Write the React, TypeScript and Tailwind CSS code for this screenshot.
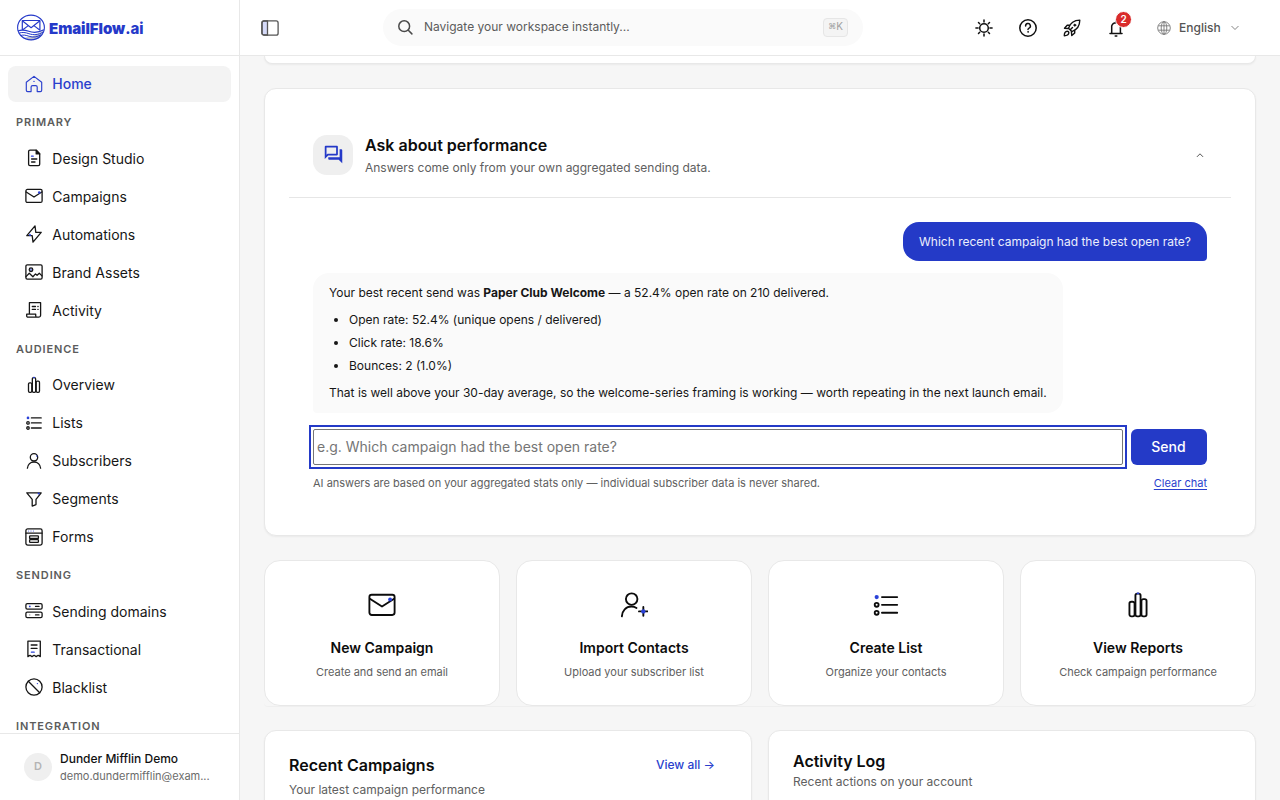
import type { ReactNode } from "react";
import { MdOutlineQuestionAnswer } from "react-icons/md";

const BLUE = "#2a41d8";

function Icon({ size = 18, sw = 1.3, className = "", children }: { size?: number; sw?: number; className?: string; children: ReactNode }) {
  return (
    <svg
      width={size}
      height={size}
      viewBox="0 0 18 18"
      fill="none"
      stroke="currentColor"
      strokeWidth={sw}
      strokeLinecap="round"
      strokeLinejoin="round"
      className={`shrink-0 ${className}`}
    >
      {children}
    </svg>
  );
}

const Dot = ({ x, y, r = 0.9 }: { x: number; y: number; r?: number }) => <circle cx={x} cy={y} r={r} fill={BLUE} stroke="none" />;

const homeIcon = (
  <>
    <path d="M1.3 7.3 9 1.4l7.7 5.9v7.9a1.4 1.4 0 0 1-1.4 1.4h-3.1v-4.5a1.5 1.5 0 0 0-1.5-1.5H7.6a1.5 1.5 0 0 0-1.5 1.5v4.5H2.7a1.4 1.4 0 0 1-1.4-1.4z" />
    <Dot x={9} y={6.4} r={0.7} />
  </>
);
const docIcon = (
  <>
    <path d="M5 1.2h6.2l3.5 3.6v10.4a1.4 1.4 0 0 1-1.4 1.4H5a1.4 1.4 0 0 1-1.4-1.4V2.6A1.4 1.4 0 0 1 5 1.2z" />
    <path d="M11.2 1.3v3.6h3.5z" fill="currentColor" />
    <path d="M6.6 10h5.2M6.6 13h3.4" />
    <path d="M6.5 7.2h1.7" stroke={BLUE} />
  </>
);
const mailIcon = (
  <>
    <rect x="0.9" y="2.4" width="16.2" height="13" rx="1.5" />
    <path d="M1.2 5 9 10l7.8-5" />
    <Dot x={14.2} y={5.4} r={1.25} />
  </>
);
const boltIcon = (
  <>
    <path d="M10 .8 1.8 10.7h5.4L8 17.2l8.2-9.9h-5.4z" />
    <Dot x={5} y={9.9} r={1} />
  </>
);
const imageIcon = (
  <>
    <rect x="0.9" y="1.9" width="16.2" height="14.2" rx="1.3" />
    <circle cx="6" cy="6.7" r="1.8" fill="#8c97e0" />
    <path d="m1 13.6 3.3-3.3 3.6 3.4 2.6-2.8 1.6 1.4 2.2-2 2.7 2.6" />
  </>
);
const activityIcon = (
  <>
    <path d="M4.4 12.6V1.7h11.2v12.5a2 2 0 0 1-2 2H3a1.3 1.3 0 0 1-1.3-1.3v-1.7h9v1.5a1.5 1.5 0 0 0 1.5 1.5" />
    <path d="M7.3 5.5h3.2M7.3 8.4h3.2M12.9 5.5h.2M12.9 8.4h.2" />
  </>
);
const barsIcon = (
  <>
    <rect x="3.5" y="6.9" width="3.3" height="9.4" rx="1.2" />
    <rect x="7.35" y="1.7" width="3.3" height="14.6" rx="1.2" />
    <rect x="11.2" y="5.2" width="3.3" height="11.1" rx="1.2" />
    <path d="M8.7 1.5h.6" stroke={BLUE} />
  </>
);
const listIcon = (
  <>
    <Dot x={3} y={3.9} r={1.35} />
    <circle cx="3" cy="8.9" r="1.25" />
    <circle cx="3" cy="14" r="1.25" />
    <path d="M6.4 3.9h9.8M6.4 8.9h9.8M6.4 14h9.8" />
  </>
);
const userIcon = (
  <>
    <circle cx="9" cy="5.3" r="3.7" />
    <path d="M2.4 16.2c.3-3.6 3-6.2 6.6-6.2s6.3 2.6 6.6 6.2" />
    <Dot x={11.8} y={4} r={0.7} />
  </>
);
const funnelIcon = (
  <>
    <path d="M1.8 2.8h14.4l-5.2 6.6v5.2l-3.8 1.5V9.4z" />
    <Dot x={13.7} y={3.5} r={1.1} />
  </>
);
const formIcon = (
  <>
    <rect x="0.9" y="0.9" width="16.2" height="16.2" rx="1.8" />
    <path d="M1 5.2h16" />
    <rect x="4.6" y="7.8" width="8.8" height="2.7" rx="0.6" />
    <rect x="4.6" y="11.6" width="8.8" height="2.7" rx="0.6" />
    <Dot x={3.6} y={3.1} r={0.5} />
    <Dot x={6} y={3.1} r={0.5} />
    <Dot x={8.4} y={3.1} r={0.5} />
  </>
);
const serverIcon = (
  <>
    <rect x="0.9" y="1.6" width="16.2" height="5.6" rx="1.4" />
    <rect x="0.9" y="10.1" width="16.2" height="5.6" rx="1.4" />
    <path d="M10.5 4.4H14M10.5 12.9H14" />
    <path d="M4.6 12.9h.2" stroke="#999" />
    <Dot x={4.8} y={4.4} r={0.9} />
  </>
);
const receiptIcon = (
  <>
    <path d="M2.9 1.2h12.4v15.4l-2.1-1.3-2 1.3-2.1-1.3L7 16.6l-2-1.3-2.1 1.3z" />
    <path d="M6.2 5H12M6.2 8.4H12" />
    <path d="M6.4 12.2h2.8" stroke={BLUE} />
  </>
);
const banIcon = (
  <>
    <circle cx="9" cy="9" r="8.1" />
    <path d="m3.3 3.3 11.4 11.4" />
    <Dot x={12.4} y={5.6} r={0.7} />
  </>
);
const userPlusIcon = (
  <>
    <circle cx="7.5" cy="5.2" r="3.7" />
    <path d="M1.2 16.3c.1-3.7 2.7-6.3 6.1-6.3 1.3 0 2.4.3 3.3.9" />
    <path d="M15 10.3v5.6M12.2 13.1h5.6" />
    <Dot x={15} y={13.1} r={1.4} />
  </>
);

function NavItem({ label, icon, active = false }: { label: string; icon: ReactNode; active?: boolean }) {
  return (
    <a className={`flex h-9 items-center gap-[9px] rounded-lg pl-[17.3px] text-sm ${active ? "bg-[#f3f3f3] font-medium text-[#2a3fcd]" : "text-[#161616]"}`}>
      <Icon sw={active ? 1.15 : 1.3} className={active ? "" : "mb-px"}>
        {icon}
      </Icon>
      <span>{label}</span>
    </a>
  );
}

function NavSection({ label, items }: { label: string; items: [string, ReactNode][] }) {
  return (
    <>
      <div className="h-[38.5px] pt-3 pl-2 text-[11px] leading-[16.5px] font-semibold tracking-[0.08em] text-[#5c5c5c]">{label}</div>
      <div className="flex flex-col gap-0.5">
        {items.map(([name, icon]) => (
          <NavItem key={name} label={name} icon={icon} />
        ))}
      </div>
    </>
  );
}

function Logo() {
  return (
    <div className="flex items-center gap-1 text-[#2539c9]">
      <svg width="29" height="27" viewBox="0 0 29 27" fill="none" stroke="currentColor" strokeLinejoin="round">
        <path d="M12 23c5 0 10-2.5 15.3-6.5-1 5-4.8 9-10.3 9.6-3 .3-5.5-.5-8-2.600z" fill="#bfc3cf" stroke="none" />
        <ellipse cx="15" cy="13.5" rx="13.4" ry="12.4" strokeWidth="1.1" />
        <path d="M6.3 16V6.5h17.6v10" strokeWidth="1.2" />
        <path d="m6.3 6.7 8.8 7 8.8-7M6.5 16l5.8-4.4M23.7 16l-5.800-4.400" strokeWidth="1.1" />
        <path d="M1.9 17c3.6-1.6 7-1 10.8.3 4.8 1.6 9.6 1.5 15.2-1.5" strokeWidth="1.2" />
        <path d="M2.7 19.3c3.6-1.5 6.8-.8 10.2.4 4.8 1.6 9.2 1.2 14.4-1.7" strokeWidth="1" />
        <path d="M4.3 21.6c3.2-1 5.6-.4 8.8.7 4.4 1.4 7.600.8 12-1.500" strokeWidth="1" />
      </svg>
      <span className="pt-0.5 text-[15px] leading-5 font-black tracking-[-0.06px]">
        EmailFlow<span className="font-extrabold">.ai</span>
      </span>
    </div>
  );
}

function Sidebar() {
  return (
    <aside className="flex h-full w-60 shrink-0 flex-col border-r border-[#e8e8e8] bg-white">
      <div className="flex h-14 shrink-0 items-center border-b border-[#e8e8e8] pl-4">
        <Logo />
      </div>
      <nav className="min-h-0 flex-1 overflow-hidden px-2 pt-2.5">
        <NavItem label="Home" icon={homeIcon} active />
        <NavSection
          label="PRIMARY"
          items={[
            ["Design Studio", docIcon],
            ["Campaigns", mailIcon],
            ["Automations", boltIcon],
            ["Brand Assets", imageIcon],
            ["Activity", activityIcon],
          ]}
        />
        <NavSection
          label="AUDIENCE"
          items={[
            ["Overview", barsIcon],
            ["Lists", listIcon],
            ["Subscribers", userIcon],
            ["Segments", funnelIcon],
            ["Forms", formIcon],
          ]}
        />
        <NavSection
          label="SENDING"
          items={[
            ["Sending domains", serverIcon],
            ["Transactional", receiptIcon],
            ["Blacklist", banIcon],
          ]}
        />
        <NavSection label="INTEGRATION" items={[]} />
      </nav>
      <div className="flex h-[67px] shrink-0 items-center gap-2 border-t border-[#e8e8e8] pl-6">
        <div className="mb-px flex size-7 items-center justify-center rounded-full bg-[#efefef] text-[11px] font-semibold text-[#b4b4b4]">D</div>
        <div className="flex flex-col">
          <span className="text-xs leading-[18px] font-medium text-[#111]">Dunder Mifflin Demo</span>
          <span className="text-[11px] leading-[17px] text-[#6b6b6b]">demo.dundermifflin@exam...</span>
        </div>
      </div>
    </aside>
  );
}

function Header() {
  return (
    <header className="flex h-14 shrink-0 items-center border-b border-[#e8e8e8] bg-white pl-[21px]">
      <svg width="18" height="16" viewBox="0 0 18 16" fill="none" stroke="#555" strokeWidth="1.3">
        <path d="M1 3a2 2 0 0 1 2-2h3.5v14H3a2 2 0 0 1-2-2z" fill="#d5daf8" />
        <rect x="0.9" y="0.9" width="16.2" height="14.3" rx="2" />
      </svg>
      <div className="ml-[104px] flex h-[37px] w-[480px] items-center rounded-full bg-[#fafafa] px-[15px]">
        <svg width="15" height="15" viewBox="0 0 15 15" fill="none" stroke="#4a4a4a" strokeWidth="1.5" strokeLinecap="round">
          <circle cx="6.2" cy="6.2" r="5.4" />
          <path d="m10.3 10.3 3.6 3.6" />
        </svg>
        <span className="ml-[11px] flex-1 pb-px text-xs text-[#5c5c5c]">Navigate your workspace instantly...</span>
        <kbd className="flex h-[19px] w-[25px] items-center justify-center rounded border border-[#e6e6e6] bg-[#f4f4f4] pb-[3px] font-['Inter'] text-[10px] text-[#a0a0a0]">
          <span className="text-[8px]">⌘</span>K
        </kbd>
      </div>
      <div className="ml-28 flex items-center gap-[26px] text-[#111]">
        <Icon sw={1.5}>
          <circle cx="9" cy="9" r="4.3" />
          <path d="M9 .9v2.200M9 14.900v2.200M.9 9h2.200M14.900 9h2.200M3.500 3.500l1.200 1.200M13.300 13.300l1.200 1.200M3.500 14.500l1.200-1.200M13.300 4.700l1.200-1.200" />
        </Icon>
        <Icon sw={1.5}>
          <circle cx="9" cy="9" r="8.2" />
          <path d="M6.600 7a2.400 2.400 0 1 1 3.500 2.100c-.8.4-1.100.8-1.100 1.400" />
          <circle cx="9" cy="12.9" r="0.4" fill="currentColor" strokeWidth="0.8" />
        </Icon>
        <Icon sw={1.4}>
          <path d="M5.500 9.200C7 4.600 10.700 1.200 16.800 1.100c0 6-3.300 9.900-7.900 11.500z" />
          <path d="M6.500 6.300H4.200L1.500 9.200l3.800.3M11.700 11.500v2.400L8.800 16.600l-.4-3.800" />
          <path d="M4.200 12.300c1.100 0 1.700.7 1.600 1.700-.2 1.600-1.800 2.600-4.500 2.700 0-2.700 1.100-4.400 2.900-4.400z" />
          <circle cx="11.8" cy="6.2" r="1.1" fill="currentColor" strokeWidth="0.6" />
          <path d="m7.500 10.500 2-2" />
        </Icon>
        <div className="relative flex">
          <Icon sw={1.5}>
            <path d="M3 14.500h12M4.700 14.300V7a4.500 4.500 0 0 1 8.700 0v7.300M8.200 16.900h1.600M9 1.500v1" />
          </Icon>
          <span className="absolute -top-[8px] left-[8px] flex size-[17px] items-center justify-center rounded-full border border-white bg-[#d92b2b] text-[10px] leading-none font-semibold text-white">2</span>
        </div>
      </div>
      <div className="ml-8 flex items-center text-xs font-medium text-[#555]">
        <svg width="14" height="14" viewBox="0 0 14 14" fill="none" stroke="#777" strokeWidth="0.9">
          <circle cx="7" cy="7" r="6.3" />
          <ellipse cx="7" cy="7" rx="2.8" ry="6.3" />
          <path d="M7 .7v12.600M1.300 4.800h11.400M1.300 9.200h11.400" />
        </svg>
        <span className="ml-2">English</span>
        <svg className="ml-[10px]" width="8" height="6" viewBox="0 0 8 6" fill="none" stroke="#777" strokeWidth="0.9" strokeLinecap="round" strokeLinejoin="round">
          <path d="m.8 1.300 3.200 3.200 3.200-3.200" />
        </svg>
      </div>
    </header>
  );
}

function AskCard() {
  return (
    <section className="h-[448px] shrink-0 rounded-xl border border-[#e8e8e8] bg-white p-6 shadow-[0_1px_2px_rgba(0,0,0,0.05)]">
      <div className="flex h-[85px] border-b border-[#e6e6e6] px-6 pt-[22px]">
        <div className="flex size-10 items-center justify-center rounded-[14px] bg-[#efefef] pb-0.5 text-[#2439c8]">
          <MdOutlineQuestionAnswer size={21} />
        </div>
        <div className="ml-3 flex flex-1 flex-col">
          <h2 className="text-base leading-5 font-semibold text-[#0c0c0c]">Ask about performance</h2>
          <p className="mt-1 text-xs leading-[18px] text-[#606060]">Answers come only from your own aggregated sending data.</p>
        </div>
        <svg className="mt-4 mr-[3px]" width="8" height="8" viewBox="0 0 8 8" fill="none" stroke="#555" strokeWidth="1" strokeLinecap="round" strokeLinejoin="round">
          <path d="m1.200 5.600 2.800-2.800 2.800 2.800" />
        </svg>
      </div>
      <div className="flex flex-col px-6 pt-6">
        <div className="self-end rounded-2xl rounded-br bg-[#243ac7] px-4 py-2.5 text-xs leading-[19px] text-[#eceffd]">
          Which recent campaign had the best open rate?
        </div>
        <div className="mt-3 self-start rounded-2xl rounded-bl bg-[#fafafa] px-4 pt-2.5 pb-[11px] text-xs leading-[19px] whitespace-nowrap text-[#161616]">
          <p>
            Your best recent send was <strong className="font-bold">Paper Club Welcome</strong> — a 52.4% open rate on 210 delivered.
          </p>
          <ul className="my-2 flex list-disc flex-col gap-1 pl-5">
            <li>Open rate: 52.4% (unique opens / delivered)</li>
            <li>Click rate: 18.6%</li>
            <li>Bounces: 2 (1.0%)</li>
          </ul>
          <p>That is well above your 30-day average, so the welcome-series framing is working — worth repeating in the next launch email.</p>
        </div>
        <div className="mt-4 flex gap-2">
          <div className="flex h-9 min-w-0 flex-1 outline-2 outline-offset-2 outline-[#243ac7]">
            <input
              className="w-full rounded-[2px] border border-[#767676] bg-white px-[3px] pb-px text-sm outline-none placeholder:text-[#757575]"
              placeholder="e.g. Which campaign had the best open rate?"
            />
          </div>
          <button className="h-9 w-[76px] rounded-md bg-[#243ac7] pr-px text-sm font-medium text-white">Send</button>
        </div>
        <div className="mt-2.5 flex justify-between text-[11px] leading-4">
          <span className="text-[#606060]">AI answers are based on your aggregated stats only — individual subscriber data is never shared.</span>
          <a className="text-[#2a3fcd] underline underline-offset-2">Clear chat</a>
        </div>
      </div>
    </section>
  );
}

const quickActions: [string, string, ReactNode][] = [
  ["New Campaign", "Create and send an email", mailIcon],
  ["Import Contacts", "Upload your subscriber list", userPlusIcon],
  ["Create List", "Organize your contacts", listIcon],
  ["View Reports", "Check campaign performance", barsIcon],
];

export default function App() {
  return (
    <div className="flex h-[800px] w-[1280px] overflow-hidden bg-[#f6f6f6] font-['Inter',sans-serif]">
      <Sidebar />
      <div className="flex min-w-0 flex-1 flex-col">
        <Header />
        <main className="flex min-h-0 flex-1 flex-col gap-6 overflow-hidden px-6">
          <section className="h-2 shrink-0 rounded-b-xl border border-t-0 border-[#e8e8e8] bg-white shadow-[0_1px_2px_rgba(0,0,0,0.05)]" />
          <AskCard />
          <div className="grid shrink-0 grid-cols-4 gap-4 rounded shadow-[0_1px_1px_rgba(0,0,0,0.03)]">
            {quickActions.map(([title, text, icon]) => (
              <div key={title} className="flex h-[146px] flex-col items-center rounded-2xl border border-[#e8e8e8] bg-white pt-[30px]">
                <Icon size={28} sw={1.2} className="text-[#0c0c0c]">
                  {icon}
                </Icon>
                <h3 className="mt-[18px] text-sm leading-[22px] font-semibold text-[#0c0c0c]">{title}</h3>
                <p className="mt-1 text-[11px] leading-[18px] text-[#606060]">{text}</p>
              </div>
            ))}
          </div>
          <div className="grid shrink-0 grid-cols-2 gap-4">
            <section className="flex h-[200px] justify-between rounded-xl border border-[#e8e8e8] bg-white p-6 shadow-[0_1px_2px_rgba(0,0,0,0.05)]">
              <div>
                <h2 className="text-base leading-5 font-semibold text-[#0c0c0c]">Recent Campaigns</h2>
                <p className="mt-1.5 text-xs leading-[18px] text-[#606060]">Your latest campaign performance</p>
              </div>
              <a className="mt-px mr-3 text-xs leading-[18px] font-medium text-[#2a3fcd]">View all →</a>
            </section>
            <section className="h-[200px] rounded-xl border border-[#e8e8e8] bg-white p-6 shadow-[0_1px_2px_rgba(0,0,0,0.05)]">
              <h2 className="-mt-1 text-base leading-5 font-semibold text-[#0c0c0c]">Activity Log</h2>
              <p className="mt-0.5 text-xs leading-[18px] text-[#606060]">Recent actions on your account</p>
            </section>
          </div>
        </main>
      </div>
    </div>
  );
}
